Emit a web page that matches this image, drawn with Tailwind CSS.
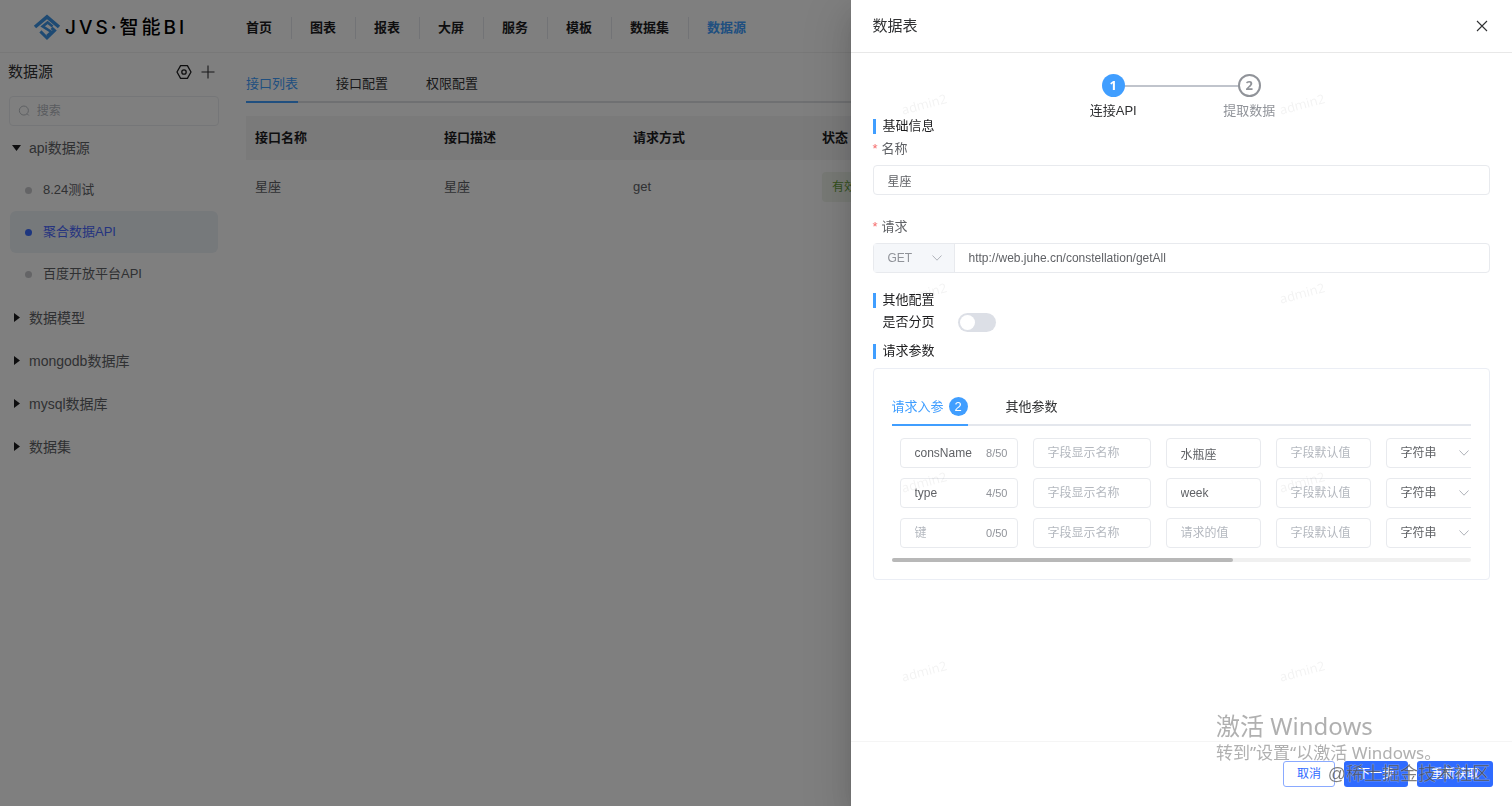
<!DOCTYPE html>
<html lang="zh-CN">
<head>
    <meta charset="UTF-8">
    <meta name="viewport" content="width=device-width, initial-scale=1.0">
    <title>JVS·智能BI - 数据源</title>
    <script src="https://cdn.jsdelivr.net/npm/@tailwindcss/browser@4"></script>
</head>
<body class="h-screen overflow-hidden bg-white font-['Liberation_Sans','Noto_Sans_CJK_SC',sans-serif] text-[13px] text-[#303133]">

    <!-- page behind the drawer -->
    <div class="flex flex-col h-full">
        <header class="flex items-center h-[53px] pt-[3px] border-b border-[#f0f0f0]">
            <a href="#" class="flex items-center w-[228px] pl-[33px] gap-1">
                <svg class="w-7 h-7" viewBox="0 0 28 28" fill="none" stroke="#3d94e6">
                    <path d="M2 13 14 2.8 26 13" stroke-width="3.6" />
                    <path d="M19.6 12.4 14.6 8.4 9.6 12.4 18.4 18 14 22" stroke-width="2.6" />
                    <path d="M7.4 17.4 14 24l7.6-7.4-3-2.8" stroke-width="3" />
                </svg>
                <span class="text-[19px] leading-7 font-medium tracking-[3px] whitespace-nowrap text-black font-['Inter','Noto_Sans_CJK_SC',sans-serif]">JVS·智能BI</span>
            </a>
            <nav class="flex items-center font-bold text-[#1d1d1f] whitespace-nowrap">
                <a href="#" class="pl-[18px] pr-[19px] border-r border-[#e4e7ed] leading-[22px]">首页</a>
                <a href="#" class="pl-[18px] pr-[19px] border-r border-[#e4e7ed] leading-[22px]">图表</a>
                <a href="#" class="pl-[18px] pr-[19px] border-r border-[#e4e7ed] leading-[22px]">报表</a>
                <a href="#" class="pl-[18px] pr-[19px] border-r border-[#e4e7ed] leading-[22px]">大屏</a>
                <a href="#" class="pl-[18px] pr-[19px] border-r border-[#e4e7ed] leading-[22px]">服务</a>
                <a href="#" class="pl-[18px] pr-[19px] border-r border-[#e4e7ed] leading-[22px]">模板</a>
                <a href="#" class="pl-[18px] pr-[19px] border-r border-[#e4e7ed] leading-[22px]">数据集</a>
                <a href="#" class="pl-[18px] pr-[19px] leading-[22px] text-[#409eff]">数据源</a>
            </nav>
        </header>

        <div class="flex flex-1 min-h-0">
            <aside class="w-[228px] shrink-0">
                <div class="flex items-center h-[38px] pl-2 pr-3">
                    <h2 class="flex-1 text-[15px]">数据源</h2>
                    <button type="button" aria-label="设置" class="mr-2">
                        <svg class="w-4 h-4" viewBox="0 0 16 16" fill="none" stroke="#1d1d1f" stroke-width="1.3">
                            <path d="M4.6 1.6h6.8L15 8l-3.6 6.4H4.6L1 8z" stroke-linejoin="round" />
                            <circle cx="8" cy="8" r="2.2" />
                        </svg>
                    </button>
                    <button type="button" aria-label="新增">
                        <svg class="w-4 h-4" viewBox="0 0 16 16" fill="none" stroke="#303133" stroke-width="1.1">
                            <path d="M8 1.5v13M1.5 8h13" />
                        </svg>
                    </button>
                </div>
                <label class="flex items-center gap-1.5 h-[30px] mt-[5px] mx-[9px] px-2 border border-[#ebedf0] rounded">
                    <svg class="w-3.5 h-3.5" viewBox="0 0 14 14" fill="none" stroke="#b4b8bf" stroke-width="1">
                        <circle cx="6.5" cy="6.5" r="5" />
                        <path d="M10.2 10.2 12 12" />
                    </svg>
                    <input type="text" aria-label="搜索" placeholder="搜索" class="w-full outline-none text-xs placeholder:text-[#b4b8bf]">
                </label>
                <ul class="mt-px text-sm text-[#606266]">
                    <li>
                        <a href="#" class="flex items-center h-[42px] pl-3 gap-2"><svg class="w-[9px] h-[6px]" viewBox="0 0 9 6" fill="#1d1d1f"><path d="M0 0h9L4.5 6z" /></svg>api数据源</a>
                        <ul class="pb-px text-[13px]">
                            <li><a href="#" class="flex items-center h-[42px] mx-[10px] pl-[15px] gap-[11px]"><i class="w-[7px] h-[7px] rounded-full bg-[#c8c9cc]"></i>8.24测试</a></li>
                            <li><a href="#" class="flex items-center h-[42px] mx-[10px] pl-[15px] gap-[11px] rounded-md bg-[#ecf2f7] text-[#4a68ff]"><i class="w-[7px] h-[7px] rounded-full bg-[#3a6cff]"></i>聚合数据API</a></li>
                            <li><a href="#" class="flex items-center h-[42px] mx-[10px] pl-[15px] gap-[11px]"><i class="w-[7px] h-[7px] rounded-full bg-[#c8c9cc]"></i>百度开放平台API</a></li>
                        </ul>
                    </li>
                    <li><a href="#" class="flex items-center h-[43px] pl-3.5 gap-[9px]"><svg class="w-[6px] h-[9px]" viewBox="0 0 6 9" fill="#1d1d1f"><path d="M0 0v9l6-4.5z" /></svg>数据模型</a></li>
                    <li><a href="#" class="flex items-center h-[43px] pl-3.5 gap-[9px]"><svg class="w-[6px] h-[9px]" viewBox="0 0 6 9" fill="#1d1d1f"><path d="M0 0v9l6-4.5z" /></svg>mongodb数据库</a></li>
                    <li><a href="#" class="flex items-center h-[43px] pl-3.5 gap-[9px]"><svg class="w-[6px] h-[9px]" viewBox="0 0 6 9" fill="#1d1d1f"><path d="M0 0v9l6-4.5z" /></svg>mysql数据库</a></li>
                    <li><a href="#" class="flex items-center h-[43px] pl-3.5 gap-[9px]"><svg class="w-[6px] h-[9px]" viewBox="0 0 6 9" fill="#1d1d1f"><path d="M0 0v9l6-4.5z" /></svg>数据集</a></li>
                </ul>
            </aside>

            <main class="flex-1 min-w-0 pl-[18px] pr-5 pt-3">
                <div class="flex gap-[38px] h-[38px] border-b-2 border-[#dfe1e5]">
                    <a href="#" class="h-[36px] leading-[38px] border-b-2 border-[#409eff] text-[#409eff] box-content">接口列表</a>
                    <a href="#" class="leading-[38px]">接口配置</a>
                    <a href="#" class="leading-[38px]">权限配置</a>
                </div>
                <table class="w-full mt-[13px] table-fixed text-left">
                    <thead>
                        <tr class="h-11 bg-[#f4f4f5] text-[#1d1d1f]">
                            <th class="w-[189px] pl-[9px] font-bold">接口名称</th>
                            <th class="w-[189px] pl-[9px] font-bold">接口描述</th>
                            <th class="w-[189px] pl-[9px] font-bold">请求方式</th>
                            <th class="pl-[9px] font-bold">状态</th>
                        </tr>
                    </thead>
                    <tbody>
                        <tr class="h-[54px] text-[#606266]">
                            <td class="pl-[9px]">星座</td>
                            <td class="pl-[9px]">星座</td>
                            <td class="pl-[9px]">get</td>
                            <td class="pl-[9px]"><span class="inline-block px-[10px] leading-[30px] text-xs rounded bg-[#f0f5ec] text-[#67a23a]">有效</span></td>
                        </tr>
                    </tbody>
                </table>
            </main>
        </div>
    </div>

    <!-- mask -->
    <div class="fixed inset-0 bg-black/50"></div>

    <!-- drawer -->
    <section class="fixed inset-y-0 right-0 w-7/16 flex flex-col bg-white shadow-[0_16px_48px_16px_rgba(0,0,0,0.08),0_12px_32px_rgba(0,0,0,0.12),0_8px_16px_-8px_rgba(0,0,0,0.16)]">
        <div class="flex items-center justify-between h-[53px] pl-[22px] pr-6 border-b border-[#e8e8e8]">
            <h2 class="text-[15px]">数据表</h2>
            <button type="button" aria-label="关闭">
                <svg class="w-3 h-3" viewBox="0 0 12 12" fill="none" stroke="#303133" stroke-width="1.1"><path d="M1 1l10 10M11 1 1 11" /></svg>
            </button>
        </div>

        <form class="flex-1 min-h-0 px-[22px] pt-[21px]">
            <ol class="flex w-[272px] h-[43px] mx-auto text-center">
                <li class="relative flex-1">
                    <div class="absolute left-1/2 top-[11px] w-full h-[2px] bg-[#c0c4cc]"></div>
                    <span class="relative block w-[23px] h-[23px] mx-auto rounded-full bg-[#409eff] leading-[23px] text-white font-bold font-['Open_Sans',sans-serif]">1</span>
                    <span class="block mt-1 leading-[20px] text-[#303133]">连接API</span>
                </li>
                <li class="relative flex-1 text-[#909399]">
                    <span class="block w-[23px] h-[23px] mx-auto rounded-full border-2 border-[#909399] bg-white leading-[19px] font-bold font-['Open_Sans',sans-serif]">2</span>
                    <span class="block mt-1 leading-[20px]">提取数据</span>
                </li>
            </ol>

            <h3 class="flex items-center gap-[7px] h-[18px] text-[#1d1d1f]"><i class="w-[3px] h-[15px] bg-[#409eff]"></i>基础信息</h3>
            <label for="name" class="flex gap-1 h-[30px] leading-[28px] text-[#606266]"><span class="text-[#f56c6c]">*</span>名称</label>
            <input id="name" type="text" value="星座" class="block w-full h-[30px] px-[14px] border border-[#e8eaee] rounded text-xs text-[#606266] outline-none">

            <label for="url" class="flex gap-1 h-[48px] pt-[18px] leading-[28px] text-[#606266]"><span class="text-[#f56c6c]">*</span>请求</label>
            <div class="flex h-[30px] border border-[#e8eaee] rounded">
                <div class="relative w-[81px] border-r border-[#e8eaee] bg-[#f5f7fa]">
                    <select aria-label="请求方法" class="w-full h-full pl-[14px] appearance-none outline-none text-xs text-[#909399]"><option>GET</option></select>
                    <svg class="absolute right-3 top-[11px] w-2.5 h-1.5 pointer-events-none" viewBox="0 0 10 6" fill="none" stroke="#b0b3ba"><path d="M.5 .5 5 5.2 9.5 .5" /></svg>
                </div>
                <input id="url" type="text" value="http://web.juhe.cn/constellation/getAll" class="flex-1 px-[14px] text-xs text-[#606266] outline-none">
            </div>

            <h3 class="flex items-center gap-[7px] h-[18px] mt-[18px] text-[#1d1d1f]"><i class="w-[3px] h-[15px] bg-[#409eff]"></i>其他配置</h3>
            <div class="flex items-center gap-[23px] h-[26px] pl-[10px] text-[#1d1d1f]">
                <label for="paging">是否分页</label>
                <input id="paging" type="checkbox" role="switch" class="w-[38px] h-[19px] appearance-none rounded-full bg-[#dcdfe6] before:block before:w-[15px] before:h-[15px] before:m-[2px] before:rounded-full before:bg-white checked:bg-[#409eff] checked:before:ml-[21px]">
            </div>
            <h3 class="flex items-center gap-[7px] h-[18px] mt-[7px] text-[#1d1d1f]"><i class="w-[3px] h-[15px] bg-[#409eff]"></i>请求参数</h3>

            <div class="mt-2 px-[18px] pt-5 pb-[17px] border border-[#ebeef5] rounded">
                <div class="flex gap-[38px] h-[37px] border-b-2 border-[#e4e7ed] text-[#303133]">
                    <a href="#" class="flex items-center gap-[5px] h-[35px] box-content border-b-2 border-[#409eff] text-[#409eff]">请求入参<span class="w-[19px] h-[19px] rounded-full bg-[#409eff] text-white text-center leading-[19px]">2</span></a>
                    <a href="#" class="leading-[35px]">其他参数</a>
                </div>
                <div class="flex flex-col gap-[10px] overflow-hidden pt-3 pl-2 text-xs text-[#606266]">
                    <div class="flex gap-[15px] w-max">
                        <label class="flex items-center w-[118px] h-[30px] pl-[14px] pr-[9px] border border-[#e8eaee] rounded"><input type="text" aria-label="键" placeholder="键" value="consName" class="w-full min-w-0 outline-none placeholder:text-[#b4b8bf]"><span class="text-[11px] text-[#909399]">8/50</span></label>
                        <input type="text" aria-label="字段显示名称" placeholder="字段显示名称" class="w-[118px] h-[30px] px-[14px] border border-[#e8eaee] rounded outline-none placeholder:text-[#b4b8bf]">
                        <input type="text" aria-label="请求的值" placeholder="请求的值" value="水瓶座" class="w-[95px] h-[30px] px-[14px] border border-[#e8eaee] rounded outline-none placeholder:text-[#b4b8bf]">
                        <input type="text" aria-label="字段默认值" placeholder="字段默认值" class="w-[95px] h-[30px] px-[14px] border border-[#e8eaee] rounded outline-none placeholder:text-[#b4b8bf]">
                        <div class="relative w-[95px] h-[30px]">
                            <select aria-label="字段类型" class="w-full h-full pl-[14px] border border-[#e8eaee] rounded appearance-none outline-none"><option>字符串</option></select>
                            <svg class="absolute right-3 top-3 w-2.5 h-1.5 pointer-events-none" viewBox="0 0 10 6" fill="none" stroke="#b0b3ba"><path d="M.5 .5 5 5.2 9.5 .5" /></svg>
                        </div>
                    </div>
                    <div class="flex gap-[15px] w-max">
                        <label class="flex items-center w-[118px] h-[30px] pl-[14px] pr-[9px] border border-[#e8eaee] rounded"><input type="text" aria-label="键" placeholder="键" value="type" class="w-full min-w-0 outline-none placeholder:text-[#b4b8bf]"><span class="text-[11px] text-[#909399]">4/50</span></label>
                        <input type="text" aria-label="字段显示名称" placeholder="字段显示名称" class="w-[118px] h-[30px] px-[14px] border border-[#e8eaee] rounded outline-none placeholder:text-[#b4b8bf]">
                        <input type="text" aria-label="请求的值" placeholder="请求的值" value="week" class="w-[95px] h-[30px] px-[14px] border border-[#e8eaee] rounded outline-none placeholder:text-[#b4b8bf]">
                        <input type="text" aria-label="字段默认值" placeholder="字段默认值" class="w-[95px] h-[30px] px-[14px] border border-[#e8eaee] rounded outline-none placeholder:text-[#b4b8bf]">
                        <div class="relative w-[95px] h-[30px]">
                            <select aria-label="字段类型" class="w-full h-full pl-[14px] border border-[#e8eaee] rounded appearance-none outline-none"><option>字符串</option></select>
                            <svg class="absolute right-3 top-3 w-2.5 h-1.5 pointer-events-none" viewBox="0 0 10 6" fill="none" stroke="#b0b3ba"><path d="M.5 .5 5 5.2 9.5 .5" /></svg>
                        </div>
                    </div>
                    <div class="flex gap-[15px] w-max">
                        <label class="flex items-center w-[118px] h-[30px] pl-[14px] pr-[9px] border border-[#e8eaee] rounded"><input type="text" aria-label="键" placeholder="键" class="w-full min-w-0 outline-none placeholder:text-[#b4b8bf]"><span class="text-[11px] text-[#909399]">0/50</span></label>
                        <input type="text" aria-label="字段显示名称" placeholder="字段显示名称" class="w-[118px] h-[30px] px-[14px] border border-[#e8eaee] rounded outline-none placeholder:text-[#b4b8bf]">
                        <input type="text" aria-label="请求的值" placeholder="请求的值" class="w-[95px] h-[30px] px-[14px] border border-[#e8eaee] rounded outline-none placeholder:text-[#b4b8bf]">
                        <input type="text" aria-label="字段默认值" placeholder="字段默认值" class="w-[95px] h-[30px] px-[14px] border border-[#e8eaee] rounded outline-none placeholder:text-[#b4b8bf]">
                        <div class="relative w-[95px] h-[30px]">
                            <select aria-label="字段类型" class="w-full h-full pl-[14px] border border-[#e8eaee] rounded appearance-none outline-none"><option>字符串</option></select>
                            <svg class="absolute right-3 top-3 w-2.5 h-1.5 pointer-events-none" viewBox="0 0 10 6" fill="none" stroke="#b0b3ba"><path d="M.5 .5 5 5.2 9.5 .5" /></svg>
                        </div>
                    </div>
                </div>
                <div class="h-1 mt-[10px] rounded-full bg-[#f0f0f0]">
                    <div class="h-full rounded-full bg-[#b8b8b8]" style="width: 59%"></div>
                </div>
            </div>
        </form>

        <div class="flex items-center justify-end gap-[9px] h-[65px] pr-[19px] border-t border-[#f5f5f5] text-xs">
            <button type="button" class="h-[26px] px-[13px] border border-[#8aaaff] rounded-[3px] bg-white text-[#2f6bff]">取消</button>
            <button type="button" class="h-[26px] px-[14px] rounded-[3px] bg-[#2f6bff] text-white">下一步</button>
            <button type="button" class="h-[26px] px-[14px] rounded-[3px] bg-[#2f6bff] text-white">重新获取</button>
        </div>

        <!-- user watermark -->
        <div class="absolute inset-0 grid grid-cols-[378px_378px] auto-rows-[189px] pl-[50px] pt-[94px] overflow-hidden pointer-events-none text-[13px] leading-5 text-black/5 font-['Noto_Sans',sans-serif]">
            <span class="w-max h-5 -rotate-15">admin2</span><span class="w-max h-5 -rotate-15">admin2</span>
            <span class="w-max h-5 -rotate-15">admin2</span><span class="w-max h-5 -rotate-15">admin2</span>
            <span class="w-max h-5 -rotate-15">admin2</span><span class="w-max h-5 -rotate-15">admin2</span>
            <span class="w-max h-5 -rotate-15">admin2</span><span class="w-max h-5 -rotate-15">admin2</span>
        </div>
    </section>

    <!-- system activation notice -->
    <div class="fixed right-[71px] bottom-[41px] w-[225px] whitespace-nowrap pointer-events-none text-[#b0b0b0] font-['Noto_Sans','Noto_Sans_CJK_SC',sans-serif]">
        <p class="text-2xl leading-[30px]">激活 Windows</p>
        <p class="text-[17px] leading-[24px]">转到”设置“以激活 Windows。</p>
    </div>
    <p class="fixed right-[22px] bottom-[20px] whitespace-nowrap pointer-events-none text-lg leading-6 text-[#2b2b2b]/75 [-webkit-text-stroke:1px_rgba(255,255,255,0.25)]">@稀土掘金技术社区</p>
</body>
</html>
